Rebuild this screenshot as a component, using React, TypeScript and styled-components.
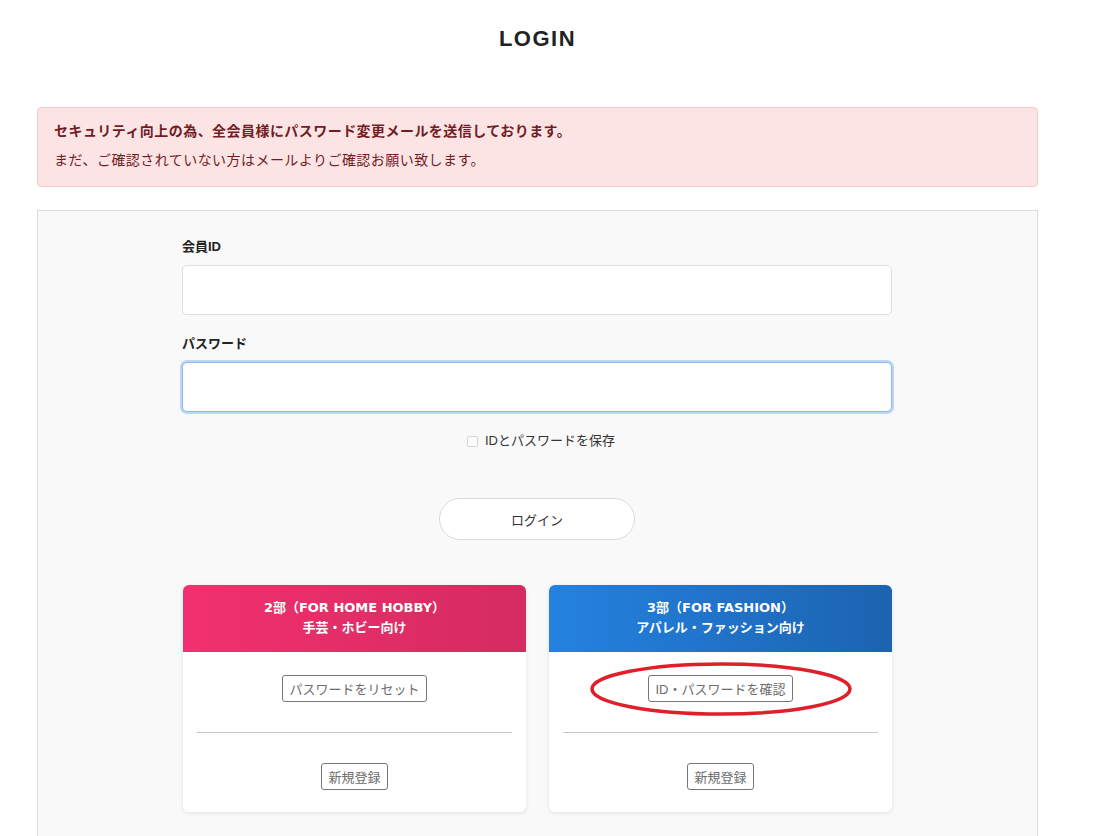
import styled, { createGlobalStyle, css } from 'styled-components'

const GlobalStyle = createGlobalStyle`
  html, body {
    margin: 0;
    padding: 0;
    background: #fff;
  }
  body {
    font-family: 'Liberation Sans', 'Noto Sans CJK JP', Arial, sans-serif;
    color: #333;
  }
`

interface IPlanCardProps {
  variant: 'hobby' | 'fashion'
  title: string
  subtitle: string
  action: string
  circled?: boolean
}

function PlanCard({ variant, title, subtitle, action, circled }: IPlanCardProps) {
  return (
    <Card>
      <CardHeader $variant={variant}>
        <div>{title}</div>
        <div>{subtitle}</div>
      </CardHeader>
      <CardBody>
        <ActionSlot>
          <SmallButton type="button">{action}</SmallButton>
          {circled && (
            <Marker viewBox="0 0 266 58" width="266" height="58">
              <ellipse cx="133" cy="29" rx="129" ry="25" fill="none" stroke="#e01f2b" strokeWidth="3.5" />
            </Marker>
          )}
        </ActionSlot>
        <Divider />
        <ActionSlot>
          <SmallButton type="button">新規登録</SmallButton>
        </ActionSlot>
      </CardBody>
    </Card>
  )
}

function App() {
  return (
    <>
      <GlobalStyle />
      <Page>
        <Title>LOGIN</Title>
        <Alert>
          <AlertLead>セキュリティ向上の為、全会員様にパスワード変更メールを送信しております。</AlertLead>
          <AlertText>まだ、ご確認されていない方はメールよりご確認お願い致します。</AlertText>
        </Alert>
        <Panel>
          <Form>
            <Label>会員ID</Label>
            <TextInput type="text" />
            <Label $spaced>パスワード</Label>
            <TextInput type="password" $focused />
            <CheckRow>
              <CheckBox type="checkbox" />
              <span>IDとパスワードを保存</span>
            </CheckRow>
            <LoginButton type="button">ログイン</LoginButton>
            <CardRow>
              <PlanCard
                variant="hobby"
                title="2部（FOR HOME HOBBY）"
                subtitle="手芸・ホビー向け"
                action="パスワードをリセット"
              />
              <PlanCard
                variant="fashion"
                title="3部（FOR FASHION）"
                subtitle="アパレル・ファッション向け"
                action="ID・パスワードを確認"
                circled
              />
            </CardRow>
          </Form>
        </Panel>
      </Page>
    </>
  )
}

const Page = styled.div`
  width: 1001px;
  margin-left: 37px;
`

const Title = styled.h1`
  margin: 0;
  padding-top: 26px;
  height: 107px;
  box-sizing: border-box;
  text-align: center;
  font-family: 'Liberation Sans', Arial, sans-serif;
  font-size: 22px;
  font-weight: bold;
  letter-spacing: 1.5px;
  color: #222;
  line-height: 26px;
`

const Alert = styled.div`
  box-sizing: border-box;
  height: 80px;
  padding: 11px 16px 14px;
  background: #fde4e4;
  border: 1px solid #f6c9cc;
  border-radius: 4px;
  color: #721c24;
  font-size: 14px;
  line-height: 25px;
  letter-spacing: 0.45px;
`

const AlertLead = styled.p`
  margin: 0;
  font-weight: bold;
`

const AlertText = styled.p`
  margin: 4px 0 0;
`

const Panel = styled.div`
  margin-top: 23px;
  background: #f9f9f9;
  border: 1px solid #dcdcdc;
  padding: 26px 0 40px;
`

const Form = styled.div`
  width: 710px;
  margin-left: 144px;
  display: flex;
  flex-direction: column;
`

const Label = styled.label<{ $spaced?: boolean }>`
  font-size: 13px;
  font-weight: bold;
  line-height: 20px;
  color: #222;
  margin-bottom: 8px;
  ${(p) => p.$spaced && css`margin-top: 19px;`}
`

const TextInput = styled.input<{ $focused?: boolean }>`
  box-sizing: border-box;
  width: 100%;
  height: 50px;
  background: #fff;
  border: 1px solid #dedede;
  border-radius: 5px;
  padding: 0 12px;
  font-size: 14px;
  outline: none;
  ${(p) =>
    p.$focused &&
    css`
      border-color: #8cb8ef;
      box-shadow: 0 0 0 2px #bcd6f8;
    `}
`

const CheckRow = styled.label`
  margin-top: 19px;
  padding-left: 8px;
  display: flex;
  align-items: center;
  justify-content: center;
  gap: 7px;
  font-size: 13px;
  line-height: 20px;
  color: #333;
`

const CheckBox = styled.input`
  width: 11px;
  height: 11px;
  margin: 0;
  appearance: none;
  border: 1px solid #d4d4d4;
  border-radius: 2px;
  background: #fff;
`

const LoginButton = styled.button`
  align-self: center;
  margin-top: 47px;
  width: 196px;
  height: 42px;
  border-radius: 21px;
  border: 1px solid #dadada;
  background: #fff;
  font-family: inherit;
  font-size: 13px;
  color: #333;
  cursor: pointer;
`

const CardRow = styled.div`
  margin-top: 45px;
  display: grid;
  grid-template-columns: 343px 343px;
  justify-content: space-between;
  padding-left: 1px;
`

const Card = styled.div`
  background: #fff;
  border-radius: 6px;
  box-shadow: 0 1px 4px rgba(0, 0, 0, 0.1);
`

const CardHeader = styled.div<{ $variant: 'hobby' | 'fashion' }>`
  height: 67px;
  box-sizing: border-box;
  padding-top: 13px;
  border-radius: 6px 6px 0 0;
  text-align: center;
  color: #fff;
  font-family: 'DejaVu Sans', 'Noto Sans CJK JP', sans-serif;
  font-size: 13px;
  font-weight: bold;
  line-height: 20px;
  background: ${(p) =>
    p.$variant === 'hobby'
      ? 'linear-gradient(90deg, #f2306f 0%, #d42b60 100%)'
      : 'linear-gradient(90deg, #2482e0 0%, #1c63b0 100%)'};
`

const CardBody = styled.div`
  padding: 23px 14px 22px;
  display: flex;
  flex-direction: column;
`

const ActionSlot = styled.div`
  position: relative;
  display: flex;
  justify-content: center;
`

const SmallButton = styled.button`
  height: 27px;
  padding: 0 6px;
  border: 1px solid #777;
  border-radius: 3px;
  background: #fff;
  font-family: inherit;
  font-size: 13px;
  color: #6c6c6c;
  cursor: pointer;
`

const Marker = styled.svg`
  position: absolute;
  left: 50%;
  top: 50%;
  transform: translate(-50%, -50%);
  pointer-events: none;
`

const Divider = styled.hr`
  width: 100%;
  margin: 30px 0;
  border: none;
  border-top: 1px solid #c8c8c8;
`

export default App
